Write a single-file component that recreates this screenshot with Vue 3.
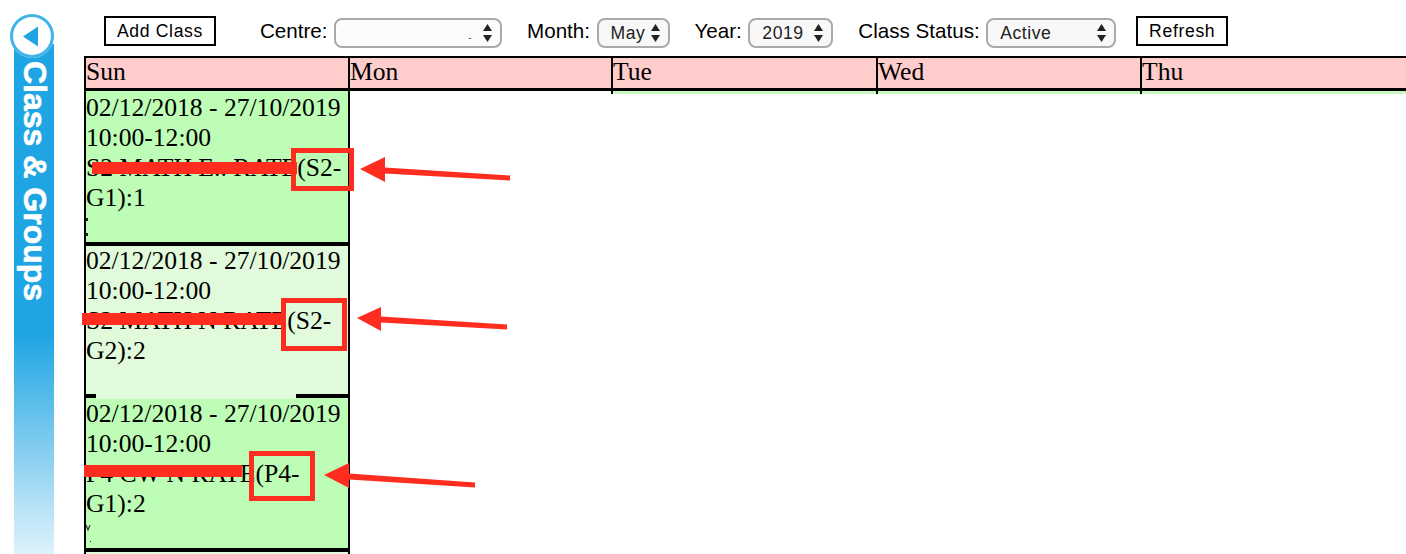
<template>
  <div class="page">
    <aside class="sidebar">
      <button class="collapse">
        <svg width="44" height="44" viewBox="0 0 44 44"><polygon points="13,22.5 28,12.5 28,32.5" fill="#1fa5e3" /></svg>
      </button>
      <div class="sidebar-title">Class &amp; Groups</div>
    </aside>

    <main class="main">
      <div class="toolbar">
        <button class="btn add-btn">Add Class</button>
        <div v-for="f in filters" :key="f.label" class="filter">
          <label>{{ f.label }}</label>
          <div class="select" :class="f.cls">
            <span class="select-value">{{ f.value }}</span>
            <svg width="9" height="18" viewBox="0 0 9 18"><polygon points="4.5,0 9,7 0,7" /><polygon points="0,11 9,11 4.5,18" /></svg>
          </div>
        </div>
        <button class="btn refresh-btn">Refresh</button>
      </div>

      <div class="calendar">
        <div class="head">
          <div v-for="d in days" :key="d" class="head-cell">{{ d }}</div>
        </div>
        <div class="body">
          <div class="col col-sun">
            <div v-for="(c, i) in classes" :key="i" class="cls" :class="c.cls">
              <div>02/12/2018 - 27/10/2019</div>
              <div>10:00-12:00</div>
              <div>{{ c.name }}</div>
            </div>
            <div class="cls last"></div>
          </div>
          <div class="col stub plain"></div>
          <div class="col stub"></div>
          <div class="col stub"></div>
          <div class="col stub end"></div>
        </div>
      </div>
    </main>

    <!-- annotations drawn on top of the screenshot -->
    <svg class="marks" width="1406" height="554" viewBox="0 0 1406 554">
      <g v-for="(m, i) in marks" :key="i" fill="#fe2d1f">
        <rect :x="m.bar[0]" :y="m.bar[1]" :width="m.bar[2]" height="12" />
        <rect :x="m.box[0] + 2.5" :y="m.box[1] + 2.5" :width="m.box[2] - 5" :height="m.box[3] - 5" fill="none" stroke="#fe2d1f" stroke-width="5" />
        <polygon :points="m.arrow" />
      </g>
      <!-- leftovers of the erased text -->
      <rect x="86" y="218" width="2" height="3" fill="#222" />
      <rect x="86" y="233" width="2" height="3" fill="#222" />
      <path d="M86 525 L88 530 L90 525" fill="none" stroke="#333" stroke-width="1.2" />
      <rect x="90" y="541" width="1" height="1" fill="#222" />
    </svg>
  </div>
</template>

<script setup>
const days = ['Sun', 'Mon', 'Tue', 'Wed', 'Thu']

const filters = [
  { label: 'Centre:', value: '-', cls: 'centre' },
  { label: 'Month:', value: 'May', cls: 'month' },
  { label: 'Year:', value: '2019', cls: 'year' },
  { label: 'Class Status:', value: 'Active', cls: 'status' }
]

const classes = [
  { name: 'S2 MATH E.. RATE(S2-G1):1', cls: 'c1' },
  { name: 'S2 MATH N RATE(S2-G2):2', cls: 'c2' },
  { name: 'P4 CW N RATE(P4-G1):2', cls: 'c3' }
]

const arrow = (tx, ty, bx, top, bot, ex, ey) =>
  `${tx},${ty} ${bx},${top} ${bx},${ty + (ey - ty) * 0.16 - 3} ${ex},${ey - 2.5} ${ex},${ey + 2.5} ${bx},${ty + (ey - ty) * 0.16 + 3} ${bx},${bot}`

const marks = [
  { bar: [92, 162, 205], box: [291, 148, 63, 43], arrow: arrow(360, 169, 385, 157, 182, 510, 178) },
  { bar: [82, 313, 203], box: [281, 298, 66, 53], arrow: arrow(357, 318, 381, 307, 331, 507, 327) },
  { bar: [84, 465, 158], box: [249, 451, 66, 50], arrow: arrow(324, 475, 349, 463, 488, 475, 485) }
]
</script>

<style scoped>
.page {
  position: relative;
  display: flex;
  width: 1406px;
  height: 554px;
  overflow: hidden;
  background: #fff;
  font-family: "Liberation Sans", Arial, sans-serif;
}

.sidebar {
  position: relative;
  flex: none;
  width: 40px;
  height: 510px;
  margin: 44px 0 0 14px;
  background: linear-gradient(#1fa5e3 0, #1fa5e3 290px, #dff2fb 510px);
}

.collapse {
  position: absolute;
  top: -30px;
  left: -4px;
  width: 44px;
  height: 44px;
  padding: 0;
  border: 0;
  border-radius: 50%;
  background: #fff;
  box-shadow: inset 0 0 0 3px #3fb3ea;
}

.collapse svg {
  display: block;
}

.sidebar-title {
  margin: 17px 0 0 3px;
  writing-mode: vertical-rl;
  color: #fff;
  font-size: 32px;
  font-weight: 700;
  line-height: 36px;
  white-space: nowrap;
  -webkit-text-stroke: 0.6px #fff;
}

.main {
  flex: 1;
  min-width: 0;
  margin-left: 30px;
  padding-top: 16px;
}

.toolbar {
  display: flex;
  align-items: flex-start;
  gap: 25px;
  height: 30px;
  margin: 0 0 10px 20px;
}

.btn {
  height: 30px;
  padding: 1px 0 0;
  border: 2px solid #000;
  background: #fff;
  color: #000;
  font-family: inherit;
  font-size: 17.6px;
  letter-spacing: 0.65px;
}

.add-btn {
  width: 112px;
  margin-right: 19px;
}

.refresh-btn {
  width: 92px;
  margin-left: -5px;
}

.filter {
  display: flex;
  align-items: flex-start;
  gap: 6.5px;
}

.filter label {
  font-size: 20.6px;
  line-height: 30px;
}

.select {
  display: flex;
  align-items: center;
  justify-content: space-between;
  box-sizing: border-box;
  height: 30px;
  margin-top: 2px;
  padding: 0 8px 0 12px;
  border: 2px solid #aaa;
  border-radius: 8px;
  background: #f8f8f8;
  color: #222;
  font-size: 17.6px;
  letter-spacing: 0.55px;
}

.select svg {
  flex: none;
  fill: #222;
}

.centre { width: 168px; background: #fcfcfc; }
.month { width: 73px; }
.year { width: 85px; }
.status { width: 130px; }

.centre .select-value {
  margin: 10px 11px 0 auto;
  font-size: 9px;
}

.calendar {
  font-family: "Liberation Serif", "Times New Roman", serif;
  font-size: 25.6px;
  line-height: 30px;
  color: #000;
}

.head,
.body {
  display: grid;
  grid-template-columns: 266px 263px 265px 264px 1fr;
}

.head {
  box-sizing: border-box;
  height: 35px;
  border-top: 2px solid #000;
  border-bottom: 3px solid #000;
  background: #fcc;
}

.head-cell {
  border-right: 2px solid #000;
  line-height: 28px;
}

.head-cell:first-child {
  border-left: 2px solid #000;
}

.head-cell:last-child {
  border-right: 0;
}

.body {
  align-items: start;
}

.col-sun {
  border-right: 2px solid #000;
  border-left: 2px solid #000;
}

.cls {
  position: relative;
  box-sizing: border-box;
  border-bottom: 4px solid #000;
  background: #bdfdb5;
}

.c1 { height: 155px; padding-top: 2px; }
.c2 { height: 152px; background: #e0fadb; }
.c3 { height: 154px; padding-top: 1px; }

/* lighter cell bleeding over its bottom border */
.c2::after {
  content: "";
  position: absolute;
  top: 100%;
  left: 10px;
  z-index: 1;
  width: 200px;
  height: 5px;
  background: #e0fadb;
}

.last {
  height: 10px;
  border-bottom: 0;
  background: #e0fadb;
}

.stub {
  box-sizing: border-box;
  height: 3px;
  border-right: 2px solid #000;
  background: #c8f7c2;
}

.plain {
  background: #fff;
}

.end {
  border-right: 0;
}

.marks {
  position: absolute;
  top: 0;
  left: 0;
  pointer-events: none;
}
</style>
